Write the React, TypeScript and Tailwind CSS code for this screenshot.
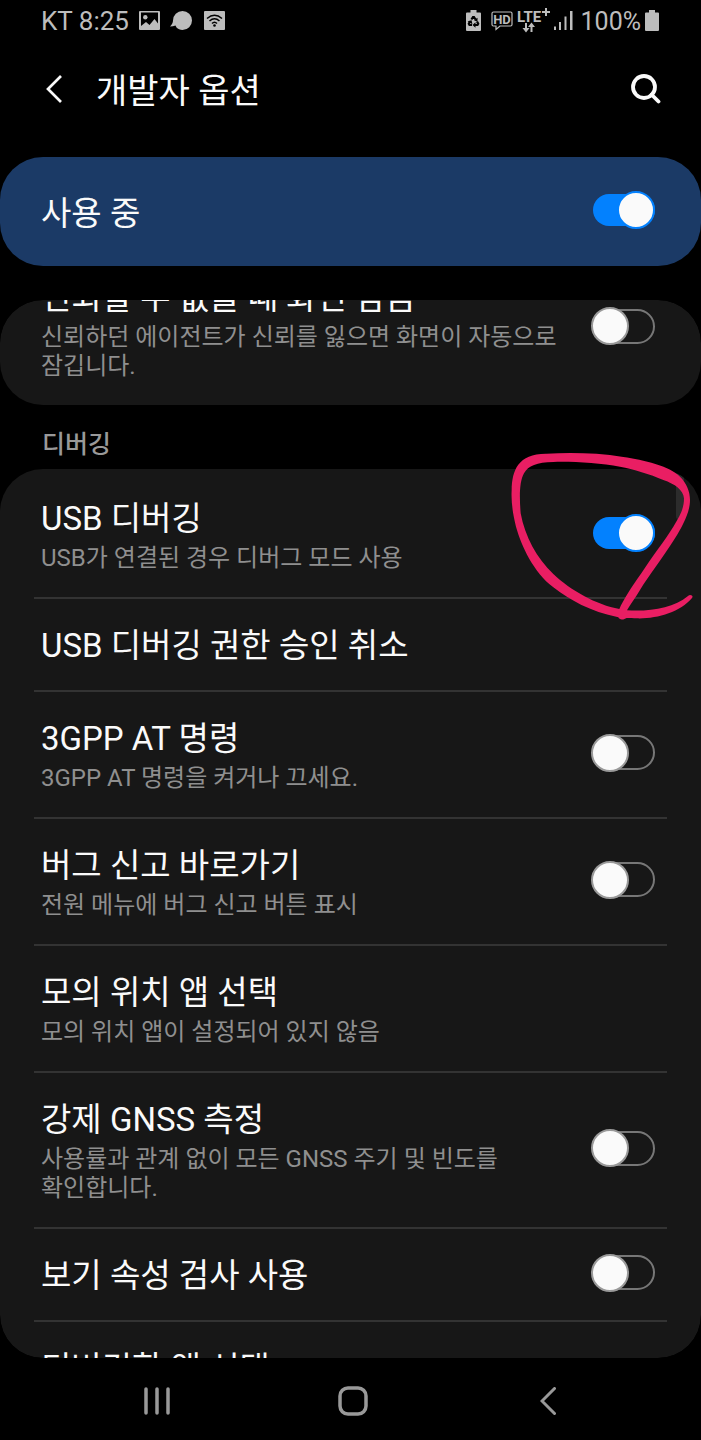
import { useId, useState } from "react";

type Setting = {
  title: string;
  summary?: string;
  toggle?: boolean;
  on?: boolean;
};

const debugging: Setting[] = [
  { title: "USB 디버깅", summary: "USB가 연결된 경우 디버그 모드 사용", toggle: true, on: true },
  { title: "USB 디버깅 권한 승인 취소" },
  { title: "3GPP AT 명령", summary: "3GPP AT 명령을 켜거나 끄세요.", toggle: true },
  { title: "버그 신고 바로가기", summary: "전원 메뉴에 버그 신고 버튼 표시", toggle: true },
  { title: "모의 위치 앱 선택", summary: "모의 위치 앱이 설정되어 있지 않음" },
  { title: "강제 GNSS 측정", summary: "사용률과 관계 없이 모든 GNSS 주기 및 빈도를 확인합니다.", toggle: true },
  { title: "보기 속성 검사 사용", toggle: true },
  { title: "디버깅할 앱 선택" },
];

function Toggle({ id, initial = false }: { id: string; initial?: boolean }) {
  const [on, setOn] = useState(initial);

  return (
    <span className="mb-1 grid h-[38px] w-16 shrink-0 items-center">
      <input
        id={id}
        type="checkbox"
        role="switch"
        checked={on}
        onChange={(e) => setOn(e.target.checked)}
        className="peer col-start-1 row-start-1 h-[35px] w-[62px] appearance-none justify-self-end rounded-full border-2 border-[#777777] checked:h-8 checked:border-0 checked:bg-[#0381fe]"
      />
      <span className="pointer-events-none col-start-1 row-start-1 size-[38px] rounded-full border-2 border-[#999999] bg-[#fafafa] peer-checked:justify-self-end peer-checked:border-[#0381fe]" />
    </span>
  );
}

function Row({ title, summary, toggle, on }: Setting) {
  const id = useId();
  const text = (
    <>
      <span className="block pt-0.5 text-[33px] leading-[41px]">{title}</span>
      {summary && (
        <span className="block pt-[5px] text-2xl leading-[29px] text-[#8f8f8f]">{summary}</span>
      )}
    </>
  );

  return (
    <li className="mx-[34px] border-b-2 border-[#333333] py-6 pr-3 pl-[7px] last:border-b-0">
      {toggle ? (
        <div className="flex items-center justify-between gap-4">
          <label htmlFor={id} className="min-w-0">{text}</label>
          <Toggle id={id} initial={on} />
        </div>
      ) : (
        <button type="button" className="block w-full text-left">{text}</button>
      )}
    </li>
  );
}

function StatusBar() {
  return (
    <div className="flex h-[42px] shrink-0 items-center justify-between pr-[42px] pl-[41px] text-[#bdbdbd]">
      <div className="flex items-center">
        <span className="mr-[10px] text-[26px] leading-8">KT 8:25</span>
        <svg className="mr-[10px] h-5 w-[21px]" viewBox="0 0 21 20" fill="currentColor">
          <path fillRule="evenodd" d="M1 0h19q1 0 1 1v17q0 1-1 1h-19q-1 0-1-1V1q0-1 1-1ZM2 1.500V15l5-4 3.500 3 5-6 3.500 4.500V1.500Z" />
          <circle cx="6.300" cy="6.300" r="2.200" />
        </svg>
        <svg className="mr-3 h-5 w-[22px]" viewBox="0 0 22 20" fill="currentColor">
          <path d="M0 15.500C2 13.500 3 11.500 3 9.500A9.500 9.500 0 1 1 12.500 19C10 19 8 18 6.500 16.500L5.500 14.500Q3 15.500 0 15.500Z" />
        </svg>
        <svg className="h-5 w-[21px]" viewBox="0 0 21 20">
          <rect width="21" height="19" rx="1" fill="currentColor" />
          <g fill="none" stroke="#000" strokeWidth="1.500">
            <path d="M3 7.500Q10.500 1 18 7.500M5.500 10Q10.500 5.500 15.500 10M8 12.500Q10.500 10 13 12.500" />
          </g>
          <circle cx="10.500" cy="14.500" r="1.300" />
        </svg>
      </div>
      <div className="flex items-center">
        <svg className="mr-[10px] h-[22px] w-[15px]" viewBox="0 0 15 22">
          <path d="M4.500 0h6v2.500H14q1 0 1 1V20q0 1-1 1H1q-1 0-1-1V3.500q0-1 1-1h3.500Z" fill="currentColor" />
          <path
            d="M5.400 9.500 7 7h1L9.600 9.500M11 11.500l1.200 2.200L11.500 15H9M6 15H3.500l-.700-1.300L4 11.500"
            fill="none"
            stroke="#000"
            strokeWidth="2.200"
          />
          <path d="M11.500 7.800v4L8 10.200ZM9.500 12.200v5.500L6.500 15ZM1.600 11.200l4-1 .800 4Z" />
        </svg>
        <svg className="mr-1 h-5 w-[22px]" viewBox="0 0 22 20">
          <path d="M2.500 1h17q1.500 0 1.500 1.500v11q0 1.500-1.500 1.500H9l-4 3.500V15H2.500Q1 15 1 13.500V2.500Q1 1 2.500 1Z" fill="none" stroke="currentColor" strokeWidth="1.200" />
          <text x="11" y="13" fill="currentColor" fontSize="13" fontWeight="700" textAnchor="middle">HD</text>
        </svg>
        <svg className="mr-1 h-[26px] w-[33px]" viewBox="0 0 33 26" fill="currentColor">
          <text x="0" y="14" fontSize="15" fontWeight="700">LTE</text>
          <path d="M28 0h2v3h3v2h-3v3h-2V5h-3V3h3ZM8 15h2v5h2.500L9 24.500 5.500 20H8ZM13.500 24v-5h-2.500L14.500 14.500l3.500 4.500h-2.500v5Z" />
        </svg>
        <svg className="mr-2 h-5 w-[19px]" viewBox="0 0 19 20" fill="currentColor">
          <path d="M0 15.500h2V19H0ZM5 11h2v8H5ZM10.500 5.500h2V19h-2ZM16 0h2.500v19H16Z" />
        </svg>
        <span className="mr-1 pt-0.5 text-[25px] leading-8">100%</span>
        <svg className="h-[22px] w-[14px]" viewBox="0 0 14 22" fill="currentColor">
          <path d="M4 0h6v2.500h3q1 0 1 1V20q0 1-1 1H1q-1 0-1-1V3.500q0-1 1-1h3Z" />
        </svg>
      </div>
    </div>
  );
}

export default function App() {
  return (
    <div className="relative flex h-screen flex-col overflow-hidden bg-black font-['Roboto','Noto_Sans_CJK_KR',sans-serif] text-[#fafafa] break-keep">
      <StatusBar />

      <header className="flex h-[115px] shrink-0 items-start pt-6 pr-10 pl-11">
        <button type="button" aria-label="뒤로" className="flex h-[46px] w-[52px] items-center">
          <svg className="h-7 w-5" viewBox="0 0 20 28" fill="none" stroke="currentColor" strokeWidth="2.700">
            <path d="M17 1 4 14 17 27" />
          </svg>
        </button>
        <h1 className="flex-1 pt-0.5 text-[34px] leading-[46px]">개발자 옵션</h1>
        <button type="button" aria-label="검색" className="flex h-[46px] items-center">
          <svg className="h-[30px] w-[31px]" viewBox="0 0 31 30" fill="none" stroke="currentColor" strokeWidth="3.800">
            <circle cx="14" cy="13" r="11" />
            <path d="m21.500 20.500 7 7" strokeLinecap="round" />
          </svg>
        </button>
      </header>

      <div className="flex h-[109px] shrink-0 items-center justify-between rounded-[43px] bg-[#1b3a66] pr-[46px] pl-[41px]">
        <label htmlFor="developer-options" className="pt-1 text-[33px] leading-[43px]">사용 중</label>
        <Toggle id="developer-options" initial />
      </div>

      <main className="mt-[34px] flex min-h-0 flex-1 flex-col overflow-hidden rounded-[43px]">
        <ul className="flex h-[105px] shrink-0 flex-col justify-end overflow-hidden rounded-[43px] bg-[#171717]">
          <Row
            title="신뢰할 수 없을 때 화면 잠금"
            summary="신뢰하던 에이전트가 신뢰를 잃으면 화면이 자동으로 잠깁니다."
            toggle
          />
        </ul>

        <h2 className="flex h-16 shrink-0 items-end px-[42px] pb-[10px] text-[25px] leading-7 font-medium text-[#999999]">
          디버깅
        </h2>

        <div className="relative min-h-0 flex-1 overflow-hidden rounded-[43px] bg-[#171717]">
          <ul className="pt-[3px]">
            {debugging.map((item) => (
              <Row key={item.title} {...item} />
            ))}
          </ul>
          <div className="absolute top-[3px] right-[17px] h-12 w-2 rounded-full bg-[#2c2c2c]" />
        </div>
      </main>

      <nav className="flex h-[82px] shrink-0 items-center justify-center pt-1 pl-1 text-[#999999]">
        <button type="button" aria-label="최근 앱" className="flex h-full w-[28%] items-center justify-center">
          <svg className="h-7 w-7" viewBox="0 0 28 28" stroke="currentColor" strokeWidth="3.500" strokeLinecap="round">
            <path d="M3 2v24M14 2v24M25 2v24" />
          </svg>
        </button>
        <button type="button" aria-label="홈" className="flex h-full w-[28%] items-center justify-center">
          <svg className="h-[30px] w-[30px]" viewBox="0 0 30 30" fill="none" stroke="currentColor" strokeWidth="3.500">
            <rect x="2" y="2" width="26" height="26" rx="8" />
          </svg>
        </button>
        <button type="button" aria-label="뒤로" className="flex h-full w-[28%] items-center justify-center">
          <svg className="h-7 w-4" viewBox="0 0 16 28" fill="none" stroke="currentColor" strokeWidth="3" strokeLinecap="round">
            <path d="M14.500 1.500 2 14 14.500 26.500" />
          </svg>
        </button>
      </nav>

      {/* marker drawn around the USB debugging switch */}
      <svg
        className="pointer-events-none absolute top-[430px] right-0 h-[210px] w-[211px]"
        viewBox="0 0 633 630"
        fill="#e91e63"
        aria-hidden="true"
      >
        <path
          fillRule="evenodd"
          d="M606 504C570 547 500 567 440 565C420 565 412 563 405 566C395 571 388 568 385 562C300 545 240 510 190 472C130 425 95 350 78 290C68 250 63 215 65 180C66 120 85 70 170 71C240 68 320 68 400 81C460 90 540 108 570 140C590 160 600 185 600 210C600 245 580 285 555 325C520 380 475 440 450 480C435 505 420 525 411 541C480 545 550 535 594 498C600 491 612 497 606 504ZM388 537C400 510 425 470 454 430C480 388 527 328 550 290C575 250 582 230 582 205C580 180 555 162 520 150C480 132 430 118 390 110C330 100 250 94 190 96C140 97 115 107 102 130C88 155 88 200 92 250C105 320 140 385 190 432C240 480 320 525 388 537Z"
        />
      </svg>
    </div>
  );
}
